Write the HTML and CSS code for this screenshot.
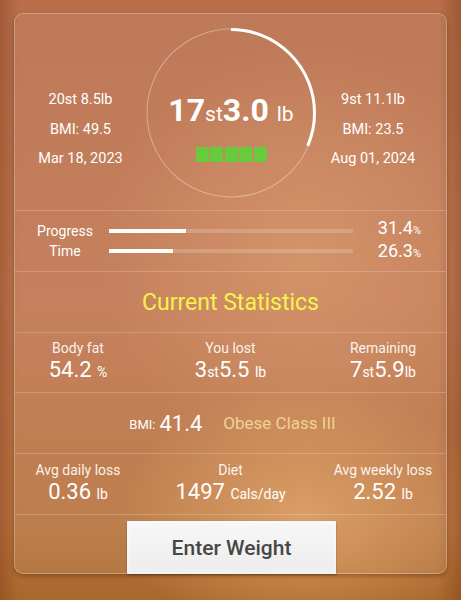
FILE: index.html
```html
<!DOCTYPE html>
<html>
<head>
<meta charset="utf-8">
<link rel="stylesheet" href="styles.css">
</head>
<body>
<div class="card">
  <section class="top">
    <div class="side left">
      <div>20st 8.5lb</div>
      <div>BMI: 49.5</div>
      <div>Mar 18, 2023</div>
    </div>
    <div class="dial">
      <svg class="ring" width="170" height="170" viewBox="0 0 170 170">
        <circle cx="85" cy="85" r="84" class="track"/>
        <circle cx="85" cy="85" r="83.5" class="arc" stroke-dasharray="164.7 600" transform="rotate(-90 85 85)"/>
      </svg>
      <div class="weight"><b>17</b><span class="u">st</span><b>3.0</b> <span class="u lb">lb</span></div>
      <div class="blocks"><i></i><i></i><i></i><i></i><i></i></div>
    </div>
    <div class="side right">
      <div>9st 11.1lb</div>
      <div>BMI: 23.5</div>
      <div>Aug 01, 2024</div>
    </div>
  </section>
  <section class="progress">
    <div class="plabels">
      <div>Progress</div>
      <div>Time</div>
    </div>
    <div class="bars">
      <div class="bar"><div class="fill" style="width:31.4%"></div></div>
      <div class="bar"><div class="fill" style="width:26.3%"></div></div>
    </div>
    <div class="pvals">
      <div>31.4<small>%</small></div>
      <div>26.3<small>%</small></div>
    </div>
  </section>
  <section class="title">Current Statistics</section>
  <section class="stats">
    <div class="stat"><div class="lbl">Body fat</div><div class="val">54.2 <small>%</small></div></div>
    <div class="stat"><div class="lbl">You lost</div><div class="val">3<small>st</small>5.5 <small>lb</small></div></div>
    <div class="stat"><div class="lbl">Remaining</div><div class="val">7<small>st</small>5.9<small>lb</small></div></div>
  </section>
  <section class="bmi">
    <span class="bmil">BMI:</span> <span class="bmiv">41.4</span><span class="cls">Obese Class III</span>
  </section>
  <section class="stats stats2">
    <div class="stat"><div class="lbl">Avg daily loss</div><div class="val">0.36 <small>lb</small></div></div>
    <div class="stat"><div class="lbl">Diet</div><div class="val">1497 <small>Cals/day</small></div></div>
    <div class="stat"><div class="lbl">Avg weekly loss</div><div class="val">2.52 <small>lb</small></div></div>
  </section>
  <section class="action">
    <button class="enter">Enter Weight</button>
  </section>
</div>
</body>
</html>
```
FILE: styles.css
```css
html, body {
  margin: 0;
  padding: 0;
}
body {
  width: 461px;
  height: 600px;
  overflow: hidden;
  font-family: Roboto, "Noto Sans", sans-serif;
  color: #fff;
  background:
    linear-gradient(90deg, rgba(120,50,20,0.35) 0%, rgba(120,50,20,0) 4%, rgba(120,50,20,0) 95%, rgba(110,50,20,0.35) 100%),
    radial-gradient(ellipse 40% 22% at 66% 86%, rgba(222,156,92,0.85), rgba(222,156,92,0) 100%),
    radial-gradient(ellipse 45% 35% at 66% 42%, rgba(216,148,100,0.7), rgba(216,148,100,0) 100%),
    linear-gradient(180deg, #b86e4a 0%, #c07650 50%, #b8743e 88%, #a8682c 100%);
}
.card {
  box-sizing: border-box;
  margin: 13px 14px 0 14px;
  width: 433px;
  height: 561px;
  border-radius: 9px;
  border: 1px solid rgba(255,255,255,0.28);
  background: rgba(255,255,255,0.08);
  box-shadow: 0 2px 4px rgba(60,20,0,0.35);
  display: flex;
  flex-direction: column;
}
section {
  border-bottom: 1px solid rgba(255,255,255,0.2);
  box-sizing: border-box;
}
.top {
  height: 197px;
  display: flex;
  padding-top: 14px;
}
.side {
  display: flex;
  flex-direction: column;
  align-items: center;
  gap: 10px;
  font-size: 14.5px;
  line-height: 19.5px;
  padding-top: 62px;
}
.left { width: 131px; }
.right { width: 114px; }
.dial {
  position: relative;
  width: 170px;
  height: 170px;
  display: flex;
  flex-direction: column;
  align-items: center;
}
.ring {
  position: absolute;
  left: 0;
  top: 0;
}
.track {
  fill: none;
  stroke: rgba(255,255,255,0.35);
  stroke-width: 1.1;
}
.arc {
  fill: none;
  stroke: #fff;
  stroke-width: 3;
}
.weight {
  margin-top: 64px;
  font-size: 32px;
  line-height: 36px;
  white-space: nowrap;
}
.weight b { font-weight: 700; }
.weight .u { font-size: 21px; font-weight: 400; }
.blocks {
  margin-top: 15px;
  display: flex;
  gap: 1.5px;
}
.blocks i {
  width: 13px;
  height: 15px;
  background: #66cc3c;
}
.progress {
  height: 61px;
  display: flex;
  align-items: center;
  padding: 0 25px 0 20px;
}
.plabels {
  width: 60px;
  display: flex;
  flex-direction: column;
  align-items: center;
  font-size: 14px;
  line-height: 20px;
  margin-top: -1px;
}
.bars {
  margin-left: 14px;
  width: 244px;
  display: flex;
  flex-direction: column;
  gap: 16px;
}
.bar {
  height: 4px;
  background: rgba(255,255,255,0.18);
}
.fill {
  height: 100%;
  background: #fff;
}
.pvals {
  flex: 1;
  display: flex;
  flex-direction: column;
  align-items: flex-end;
  font-size: 18px;
  line-height: 20px;
}
.pvals small { font-size: 11px; }
.title {
  height: 61px;
  display: flex;
  align-items: center;
  justify-content: center;
  color: #f6f24c;
  font-size: 23px;
  padding-top: 1px;
}
.stats {
  height: 60px;
  display: grid;
  grid-template-columns: 126px 1fr 126px;
  padding: 6px 0 0 0;
}
.stat {
  display: flex;
  flex-direction: column;
  align-items: center;
}
.lbl {
  font-size: 14px;
  line-height: 18px;
  color: rgba(255,255,255,0.92);
}
.val {
  font-size: 22px;
  line-height: 26px;
  white-space: nowrap;
}
.val small { font-size: 14px; }
.bmi {
  height: 61px;
  display: flex;
  align-items: center;
  justify-content: center;
  padding-left: 4px;
}
.bmil { font-size: 13px; margin-right: 4px; margin-top: 3px; }
.bmiv { font-size: 22px; }
.cls {
  margin-left: 21px;
  color: #efd396;
  font-size: 17px;
}
.stats2 { height: 61px; padding-top: 7px; }
.action {
  border-bottom: none;
  flex: 1;
  display: flex;
  justify-content: center;
  align-items: flex-end;
  padding-left: 2px;
}
.enter {
  width: 209px;
  height: 53px;
  margin-bottom: -1px;
  border: none;
  border-radius: 1px;
  background: linear-gradient(180deg, #f7f7f7, #ededed);
  box-shadow: 0 1px 2px rgba(0,0,0,0.35), inset 0 0 6px rgba(255,255,255,0.8);
  color: #464646;
  font-family: Roboto, sans-serif;
  font-weight: 500;
  font-size: 21px;
  padding: 0;
}
```
